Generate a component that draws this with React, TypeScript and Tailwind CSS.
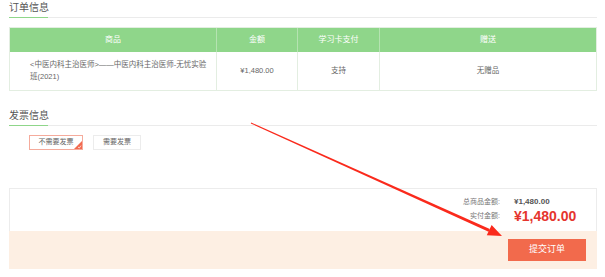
import React from 'react';

const font = "font-['Liberation_Sans','Noto_Sans_CJK_SC',sans-serif]";

function SectionTitle({ title }: { title: string }) {
  return (
    <div className="relative h-[18px] border-b border-[#ebebeb]">
      <span className="block pt-[2px] text-[10px] leading-[12px] text-[#555]">{title}</span>
      <div className="absolute left-0 bottom-[-1px] h-px w-[39px] bg-[#8fd68a]" />
    </div>
  );
}

export default function App() {
  return (
    <div className={`relative w-[605px] h-[277px] bg-white overflow-hidden ${font}`}>
      <div className="ml-[9px] w-[588px]">
        {/* 订单信息 */}
        <SectionTitle title="订单信息" />

        <div className="mt-[9px] border border-[#e3eee1]">
          <div className="flex h-[24px] bg-[#8fd68a] text-[8px] text-white">
            <div className="w-[207px] flex items-center justify-center border-r border-[#b5e3b1]">商品</div>
            <div className="w-[81px] flex items-center justify-center border-r border-[#b5e3b1]">金额</div>
            <div className="w-[82px] flex items-center justify-center border-r border-[#b5e3b1]">学习卡支付</div>
            <div className="flex-1 flex items-center justify-center">赠送</div>
          </div>
          <div className="flex h-[38px] text-[7.5px] text-[#666]">
            <div className="w-[207px] flex items-center pl-[20px] pr-[6px] border-r border-[#e3eee1] leading-[12px]">
              &lt;中医内科主治医师&gt;——中医内科主治医师-无忧实验班(2021)
            </div>
            <div className="w-[81px] flex items-center justify-center border-r border-[#e3eee1]">¥1,480.00</div>
            <div className="w-[82px] flex items-center justify-center border-r border-[#e3eee1]">支持</div>
            <div className="flex-1 flex items-center justify-center">无赠品</div>
          </div>
        </div>

        {/* 发票信息 */}
        <div className="mt-[17px]">
          <SectionTitle title="发票信息" />
        </div>

        <div className="mt-[9px] ml-[20px] flex gap-[10px] text-[7px] text-[#666]">
          <div className="relative w-[54px] h-[15px] flex items-center justify-center border border-[#f5ab9c]">
            不需要发票
            <svg className="absolute right-0 bottom-0" width="8" height="8" viewBox="0 0 8 8">
              <polygon points="8,0 8,8 0,8" fill="#f26a50" />
              <polyline points="4,6 5.3,7 7,4.6" fill="none" stroke="#fff" strokeWidth="0.7" />
            </svg>
          </div>
          <div className="w-[48px] h-[15px] flex items-center justify-center border border-[#ececec]">需要发票</div>
        </div>

        {/* 结算 */}
        <div className="mt-[38px] border-t border-l border-r border-[#ececec]">
          <div className="h-[42px] flex flex-col pt-[8px] gap-[1px] pr-[21px]">
            <div className="h-[10px] flex items-center justify-end">
              <span className="text-[7px] text-[#777]">总商品金额:</span>
              <span className="ml-[14px] w-[61px] text-[8px] font-bold text-[#555]">¥1,480.00</span>
            </div>
            <div className="h-[16px] flex items-center justify-end">
              <span className="text-[7px] text-[#777]">实付金额:</span>
              <span className="ml-[14px] w-[61px] text-[14px] leading-[16px] font-bold text-[#e5352e]">¥1,480.00</span>
            </div>
          </div>
        </div>
        <div className="h-[38px] bg-[#fdefe3] flex items-start justify-end pt-[8px] pr-[11px]">
          <button className="w-[78px] h-[22px] bg-[#f26a4c] text-white text-[9px]">提交订单</button>
        </div>
      </div>

      {/* annotation arrow */}
      <svg className="absolute left-0 top-0 pointer-events-none" width="605" height="277" viewBox="0 0 605 277">
        <polygon points="251.2,122.5 250.8,123.5 488.6,231.7 489.8,228.9" fill="#fa2a1c" />
        <polygon points="502,236 486.8,235.3 491.6,224.9" fill="#fa2a1c" />
      </svg>
    </div>
  );
}
